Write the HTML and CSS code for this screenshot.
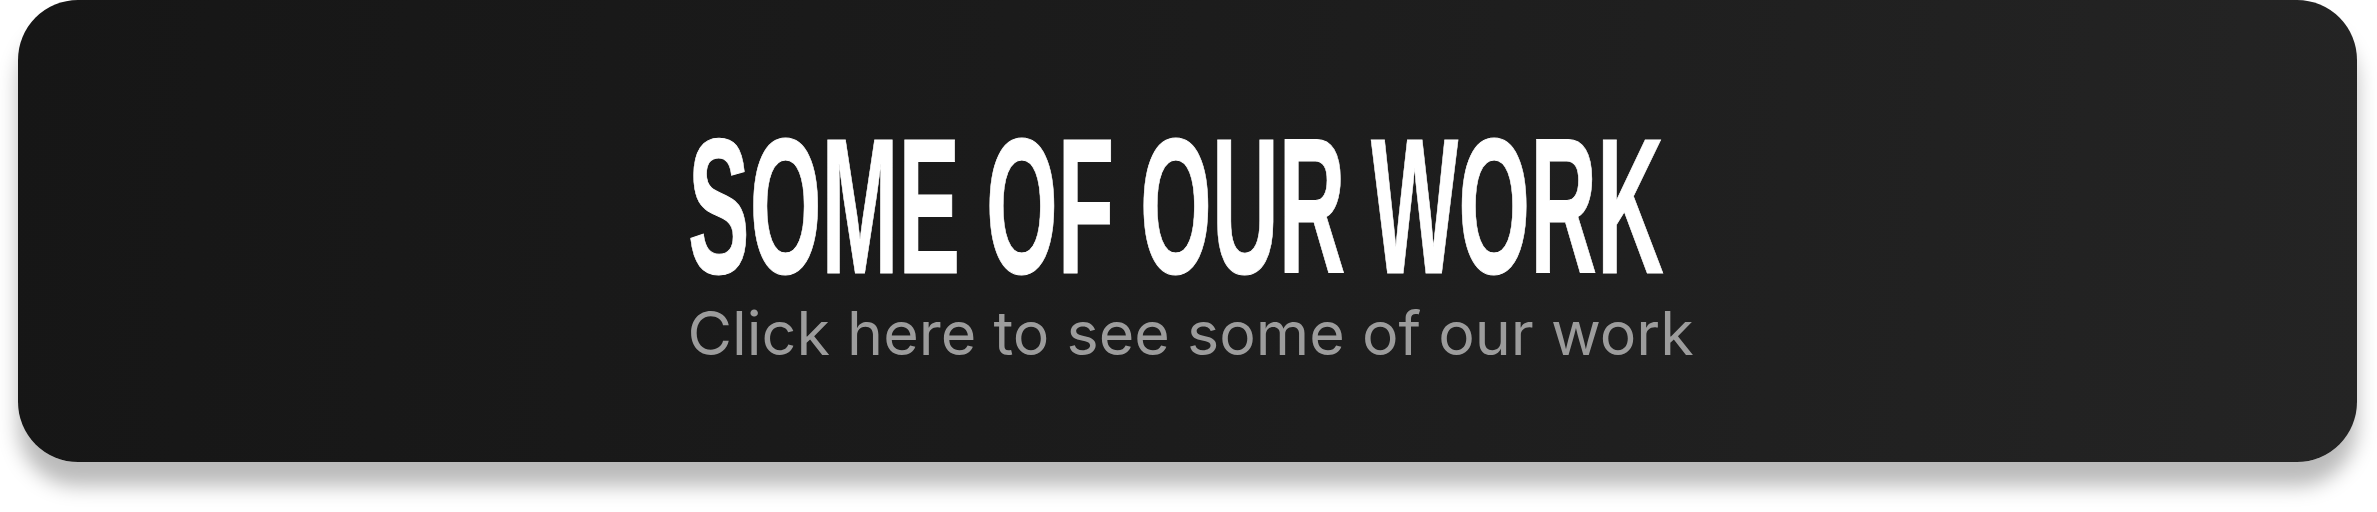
FILE: index.html
```html
<!DOCTYPE html>
<html lang="en">
<head>
<meta charset="utf-8">
<title>Some of our work</title>
<link rel="stylesheet" href="styles.css">
</head>
<body>
<a class="card" href="#">
  <div class="content">
    <h1 class="title"><span class="title-text">SOME OF OUR WORK</span></h1>
    <p class="subtitle">Click here to see some of our work</p>
  </div>
</a>
</body>
</html>
```
FILE: styles.css
```css
html, body {
  margin: 0;
  padding: 0;
  background: #ffffff;
}
body {
  width: 2377px;
  height: 512px;
  padding: 0 20px 0 18px;
  box-sizing: border-box;
}
.card {
  display: flex;
  justify-content: center;
  align-items: flex-start;
  height: 462px;
  border-radius: 60px;
  background: linear-gradient(95deg, #161616 0%, #1c1c1c 50%, #242424 100%);
  box-shadow: 0 24px 20px rgba(0, 0, 0, 0.27);
  text-decoration: none;
}
.content {
  display: flex;
  flex-direction: column;
  align-items: flex-start;
  width: 1000px;
  padding-top: 121px;
}
.title {
  margin: 0;
  width: 1000px;
  height: 170px;
  font-family: "Liberation Sans", sans-serif;
  font-weight: 700;
  font-size: 193px;
  line-height: 170px;
  color: #ffffff;
  white-space: nowrap;
}
.title-text {
  display: inline-block;
  width: 2032px;
  margin-right: -1059px;
  transform: scaleX(0.479);
  transform-origin: left center;
  -webkit-text-stroke: 1px #ffffff;
}
.subtitle {
  margin: 6px 0 0;
  font-family: Inter, "Noto Sans", sans-serif;
  font-weight: 400;
  font-size: 61px;
  line-height: 72px;
  color: #9c9c9c;
  white-space: nowrap;
}
```
